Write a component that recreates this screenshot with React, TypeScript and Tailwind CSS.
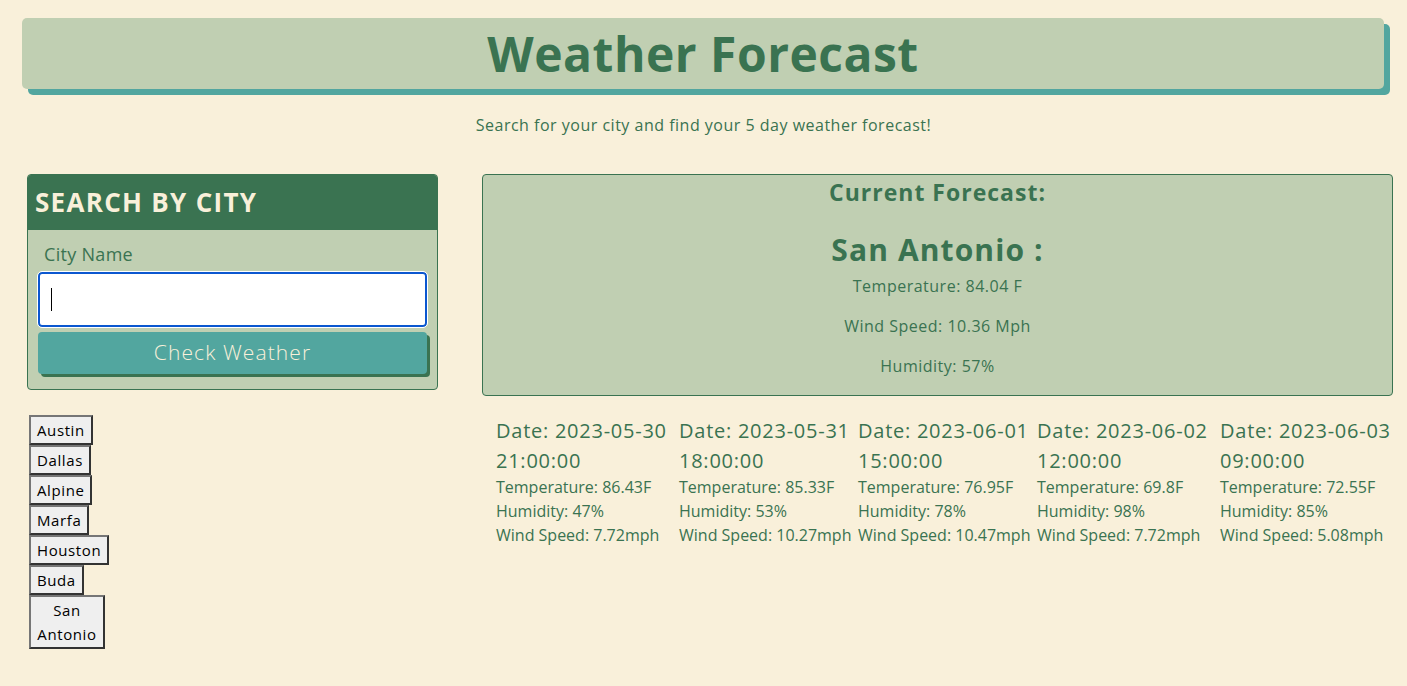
import React from "react";

const cities = ["Austin", "Dallas", "Alpine", "Marfa", "Houston", "Buda", "San Antonio"];

const forecast = [
  { day: "2023-05-30", time: "21:00:00", temp: "86.43", humidity: "47", wind: "7.72" },
  { day: "2023-05-31", time: "18:00:00", temp: "85.33", humidity: "53", wind: "10.27" },
  { day: "2023-06-01", time: "15:00:00", temp: "76.95", humidity: "78", wind: "10.47" },
  { day: "2023-06-02", time: "12:00:00", temp: "69.8", humidity: "98", wind: "7.72" },
  { day: "2023-06-03", time: "09:00:00", temp: "72.55", humidity: "85", wind: "5.08" },
];

export default function App() {
  return (
    <div className="min-h-[686px] bg-[#f9f0da] text-[#3a7351] font-['Open_Sans',sans-serif] pt-[18px]">
      <header className="ml-[22px] mr-[23px] h-[71px] rounded-[5px] bg-[#c0cfb2] shadow-[6px_6px_0_#52a69f] flex items-center justify-center">
        <h1 className="text-[48px] font-bold leading-none tracking-[0.5px]">Weather Forecast</h1>
      </header>
      <p className="mt-[24px] text-center text-[16px] tracking-[0.5px]">
        Search for your city and find your 5 day weather forecast!
      </p>

      <main className="flex gap-[44px] pl-[27px] pr-[14px] mt-[37px]">
        <aside className="w-[411px] shrink-0">
          <div className="rounded-[4px] border border-[#3a7351] bg-[#c0cfb2] overflow-hidden">
            <h2 className="h-[55px] bg-[#3a7351] text-[#f9f0da] text-[26px] font-bold tracking-[1.3px] px-[7px] flex items-center">
              SEARCH BY CITY
            </h2>
            <div className="px-[10px] pt-[12px] pb-[15px]">
              <label className="block pl-[6px] text-[18px] tracking-[0.3px] leading-[24px]">City Name</label>
              <div className="relative mt-[6px]">
                <input
                  type="text"
                  className="w-full h-[55px] rounded-[4px] bg-white border-2 border-[#0b57d0] outline outline-1 outline-white px-3 text-black"
                />
                <span className="absolute left-[13px] top-[16px] h-[23px] w-px bg-black" />
              </div>
              <button className="mt-[5px] w-full h-[42px] rounded-[4px] bg-[#52a69f] text-[#f9f0da] text-[21px] font-light tracking-[1.1px] shadow-[3px_3px_0_#3a7351]">
                Check Weather
              </button>
            </div>
          </div>

          <div className="mt-[25px] ml-[2px] w-[76px] flex flex-col items-start">
            {cities.map((c) => (
              <button
                key={c}
                className="bg-[#efefef] text-black text-[15px] tracking-[0.6px] leading-[24px] px-[6px] py-[1px] border-2 border-t-[#767676] border-l-[#767676] border-r-[#333] border-b-[#333] text-center"
              >
                {c}
              </button>
            ))}
          </div>
        </aside>

        <section className="flex-1">
          <div className="rounded-[4px] border border-[#3a7351] bg-[#c0cfb2] h-[222px] text-center pt-[2px]">
            <h3 className="text-[23px] font-bold tracking-[1px] leading-[30px]">Current Forecast:</h3>
            <h2 className="mt-[23px] text-[30px] font-bold tracking-[1.1px] leading-[40px]">San Antonio :</h2>
            <p className="mt-[4px] text-[16px] tracking-[0.5px] leading-[24px]">Temperature: 84.04 F</p>
            <p className="mt-[16px] text-[16px] tracking-[0.5px] leading-[24px]">Wind Speed: 10.36 Mph</p>
            <p className="mt-[16px] text-[16px] tracking-[0.5px] leading-[24px]">Humidity: 57%</p>
          </div>

          <div className="grid grid-cols-[183px_179px_179px_183px_auto] pl-[14px] mt-[20px]">
            {forecast.map((f) => (
              <div key={f.day} className="whitespace-nowrap">
                <h4 className="text-[20px] tracking-[0.75px] leading-[30px]">
                  Date: {f.day}
                  <br />
                  {f.time}
                </h4>
                <p className="text-[16px] tracking-[0px] leading-[24px] -mt-px">Temperature: {f.temp}F</p>
                <p className="text-[16px] tracking-[0px] leading-[24px]">Humidity: {f.humidity}%</p>
                <p className="text-[16px] tracking-[0px] leading-[24px]">Wind Speed: {f.wind}mph</p>
              </div>
            ))}
          </div>
        </section>
      </main>
    </div>
  );
}
